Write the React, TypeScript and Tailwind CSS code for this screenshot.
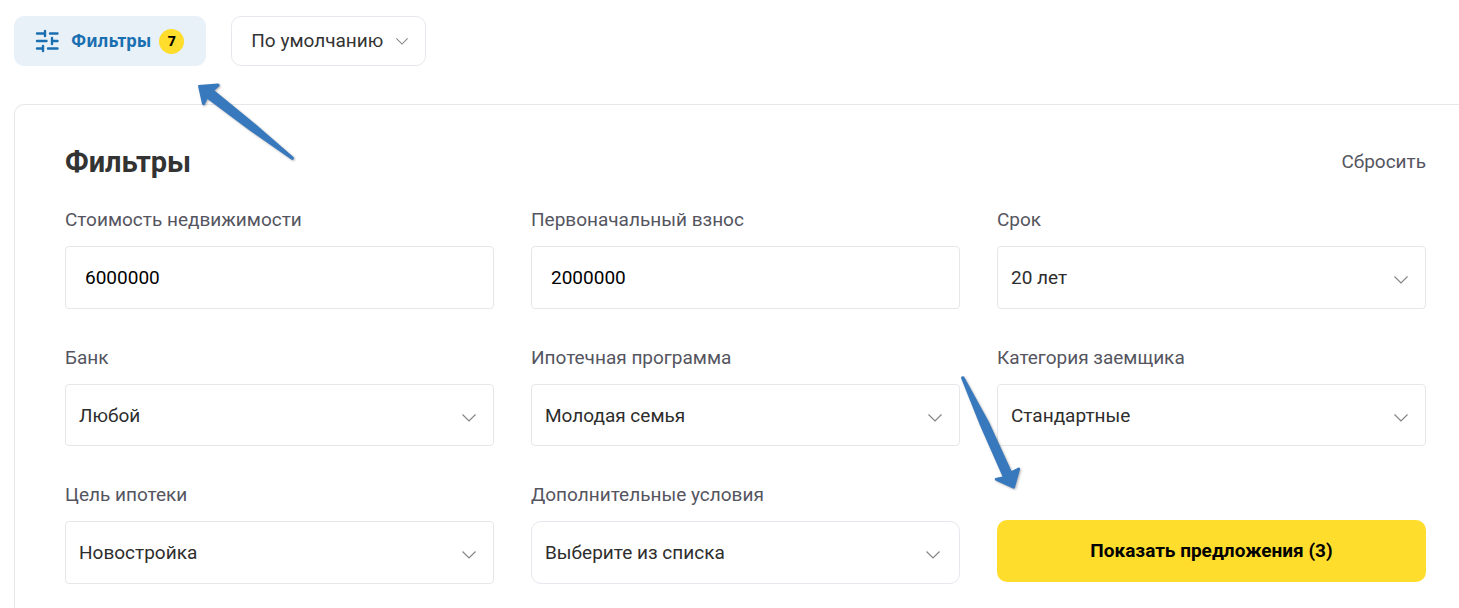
import React from "react";

interface FieldProps {
  id: string;
  label: string;
  children: React.ReactNode;
}

interface SelectFieldProps {
  id: string;
  label: string;
  options: string[];
}

const Chevron = ({ className = "w-4" }: { className?: string }) => (
  <svg
    className={`pointer-events-none ${className}`}
    viewBox="0 0 16 10"
    fill="none"
    stroke="#858585"
    strokeWidth="1.2"
    aria-hidden="true"
  >
    <path d="M1.5 1.5 8 8l6.5-6.5" />
  </svg>
);

const FilterIcon = () => (
  <svg
    width="24"
    height="24"
    viewBox="0 0 24 24"
    fill="none"
    stroke="#1a6fb0"
    strokeWidth="2.4"
    strokeLinecap="round"
    aria-hidden="true"
  >
    <path d="M2 4.5h8M10 2v5M15 4.5h7.500M2 12h9.500M17 9v6M17 12h5.500M2 19.500h6M8 17v5M13 19.500h9.500" />
  </svg>
);

const Field = ({ id, label, children }: FieldProps) => (
  <div className="flex flex-col">
    <label htmlFor={id} className="mb-3 leading-7 text-[#55555f]">
      {label}
    </label>
    {children}
  </div>
);

const TextField = ({ id, label, value }: { id: string; label: string; value: string }) => (
  <Field id={id} label={label}>
    <input
      id={id}
      type="text"
      defaultValue={value}
      className="h-[63px] w-full rounded border border-[#e5e7ea] bg-white px-[19px] text-black"
    />
  </Field>
);

const SelectField = ({ id, label, options }: SelectFieldProps) => (
  <Field id={id} label={label}>
    <div className="relative flex min-h-[62px] grow">
      <select
        id={id}
        className="w-full appearance-none rounded border border-[#e5e7ea] bg-white pt-0.5 pr-10 pl-[13px] text-[#2d2d2d]"
      >
        {options.map((option) => (
          <option key={option}>{option}</option>
        ))}
      </select>
      <Chevron className="absolute top-[29px] right-[17px] w-4" />
    </div>
  </Field>
);

const Arrows = () => (
  <>
    <svg
      className="pointer-events-none absolute top-20 left-[190px] drop-shadow-[1px_1px_1px_rgba(0,0,0,0.3)]"
      width="110"
      height="90"
      viewBox="190 80 110 90"
      fill="#3878bd"
      aria-hidden="true"
    >
      <path d="M198 86q0-1 1-1l19-1.500q2 0 1.500 2.500l-5 4.500L256 124.500 293.500 157q1.500 2.500-1.500 3L249 130 207.500 99l-3 6q-1.500 1-2.500-1z" />
    </svg>
    <svg
      className="pointer-events-none absolute top-[370px] left-[955px] drop-shadow-[1px_1px_1px_rgba(0,0,0,0.3)]"
      width="75"
      height="125"
      viewBox="955 370 75 125"
      fill="#3878bd"
      aria-hidden="true"
    >
      <path d="M961 378q0-2.500 3-1.500L989 422 1011.500 471l7-3.500q2 0 1.500 2l-5 18q-.5 1.500-2 1L995.500 480.500q-1.500-1.500 0-2.500l7-1.500L980 425.500z" />
    </svg>
  </>
);

const App = () => {
  return (
    <main className="relative bg-white pt-4 pl-3.5 font-['Roboto',sans-serif] text-[19px]">
      <div className="flex gap-[25px]">
        <button
          type="button"
          className="flex h-[50px] items-center rounded-[10px] bg-[#e8f0f8] pr-[22px] pl-[21px] font-['Noto_Sans',sans-serif] text-[17px] font-bold text-[#1a6fb0]"
        >
          <FilterIcon />
          <span className="ml-3">Фильтры</span>
          <span className="ml-2 flex size-[25px] items-center justify-center rounded-full bg-[#ffdd2d] text-sm text-black">
            7
          </span>
        </button>
        <div className="relative flex h-[50px]">
          <select
            aria-label="Сортировка"
            className="w-[195px] appearance-none rounded-[10px] border border-[#e5e8ed] bg-white pr-10 pl-[19px] text-[#333333]"
          >
            <option>По умолчанию</option>
          </select>
          <Chevron className="absolute inset-y-0 right-[17px] my-auto w-3.5" />
        </div>
      </div>

      <form className="mt-[38px] rounded-tl-[10px] border-t border-l border-[#e5e7ea] pt-9 pr-[33px] pb-6 pl-[50px]">
        <div className="flex items-center justify-between">
          <h2 className="text-[29px] leading-[42px] font-bold text-[#333333]">Фильтры</h2>
          <button type="reset" className="text-[#55555f]">
            Сбросить
          </button>
        </div>

        <div className="mt-[23px] grid grid-cols-3 gap-x-[37px] gap-y-[35px]">
          <TextField id="price" label="Стоимость недвижимости" value="6000000" />
          <TextField id="payment" label="Первоначальный взнос" value="2000000" />
          <SelectField id="term" label="Срок" options={["20 лет"]} />
          <SelectField id="bank" label="Банк" options={["Любой"]} />
          <SelectField id="program" label="Ипотечная программа" options={["Молодая семья"]} />
          <SelectField id="category" label="Категория заемщика" options={["Стандартные"]} />
          <SelectField id="purpose" label="Цель ипотеки" options={["Новостройка"]} />
          <Field id="conditions" label="Дополнительные условия">
            <button
              id="conditions"
              type="button"
              className="flex h-[63px] items-center justify-between rounded-[10px] border border-[#e5e8ed] pt-0.5 pr-[18px] pl-[13px] text-[#2d2d2d]"
            >
              Выберите из списка
              <Chevron className="mt-0.5 w-4" />
            </button>
          </Field>
          <button
            type="submit"
            className="mb-0.5 h-[62px] self-end rounded-[10px] bg-[#ffdd2d] font-bold text-black"
          >
            Показать предложения (3)
          </button>
        </div>
      </form>

      <Arrows />
    </main>
  );
};

export default App;
